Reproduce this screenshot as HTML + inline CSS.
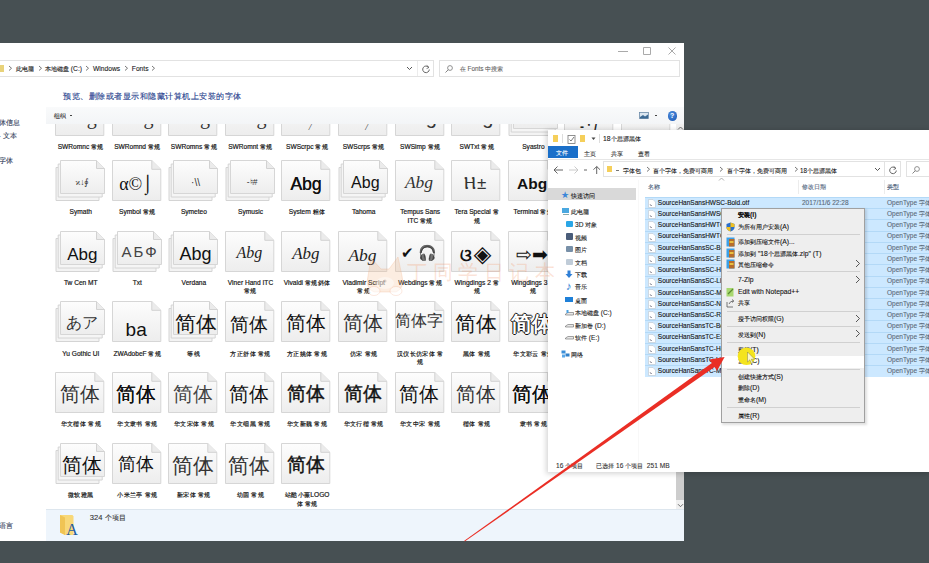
<!DOCTYPE html><html><head><meta charset="utf-8"><style>
*{margin:0;padding:0;box-sizing:border-box}
html,body{width:929px;height:563px;overflow:hidden;background:#475053;font-family:"Liberation Sans",sans-serif;color:#222}
.a{position:absolute}
.t{position:absolute;white-space:nowrap;line-height:1;-webkit-text-stroke:0.1px currentColor}
.tile{position:absolute;width:50px;height:41px}
.pg{position:absolute;left:0;top:0}
.gl{position:absolute;width:80px;text-align:center;color:#111;line-height:1;white-space:nowrap}
.lb{position:absolute;width:58px;text-align:center;font-size:6.6px;line-height:8.4px;color:#151515;white-space:nowrap;-webkit-text-stroke:0.18px currentColor}
</style></head><body>
<svg width="0" height="0" style="position:absolute"><defs>
<linearGradient id="g1" x1="0" y1="0" x2="0" y2="1"><stop offset="0" stop-color="#fdfdfd"/><stop offset="1" stop-color="#ededed"/></linearGradient>
</defs></svg>

<div class="a" id="w1" style="left:0;top:43px;width:684px;height:498px;background:#fff;overflow:hidden">
<svg class="a" style="left:600px;top:0" width="84" height="16"><path d="M18 8.5H28" stroke="#a0a0a0" stroke-width="0.9"/><path d="M43.5 4.5H50.5V11.5H43.5Z" fill="none" stroke="#a0a0a0" stroke-width="0.9"/><path d="M68.5 4.5L75.5 11.5M75.5 4.5L68.5 11.5" stroke="#a0a0a0" stroke-width="0.9"/></svg>
<div class="a" style="left:-2px;top:17.3px;width:436px;height:16.5px;border:1px solid #e2e2e2"></div>
<div class="a" style="left:417px;top:18px;width:1px;height:15px;background:#ececec"></div>
<div class="a" style="left:438.5px;top:17.3px;width:241px;height:16.5px;border:1px solid #e2e2e2"></div>
<div class="a" style="left:0;top:22px;width:4px;height:7px;background:#e8d27a"></div>
<svg class="a" style="left:7.5px;top:22.2px" width="4.5" height="6.5"><path d="M1 1L3.5 3.25L1 5.5" fill="none" stroke="#555" stroke-width="0.8"/></svg>
<div class="t" style="left:15.5px;top:23.15px;font-size:6.7px;color:#1a1a1a;"><span style="font-size:6.30px">此电脑</span></div>
<svg class="a" style="left:37.6px;top:22.2px" width="4.5" height="6.5"><path d="M1 1L3.5 3.25L1 5.5" fill="none" stroke="#555" stroke-width="0.8"/></svg>
<div class="t" style="left:45.0px;top:23.15px;font-size:6.7px;color:#1a1a1a;"><span style="font-size:6.30px">本地磁盘</span> (C:)</div>
<svg class="a" style="left:85.3px;top:22.2px" width="4.5" height="6.5"><path d="M1 1L3.5 3.25L1 5.5" fill="none" stroke="#555" stroke-width="0.8"/></svg>
<div class="t" style="left:93.0px;top:23.15px;font-size:6.7px;color:#1a1a1a;">Windows</div>
<svg class="a" style="left:123.7px;top:22.2px" width="4.5" height="6.5"><path d="M1 1L3.5 3.25L1 5.5" fill="none" stroke="#555" stroke-width="0.8"/></svg>
<div class="t" style="left:131.8px;top:23.15px;font-size:6.7px;color:#1a1a1a;">Fonts</div>
<svg class="a" style="left:151.0px;top:22.2px" width="4.5" height="6.5"><path d="M1 1L3.5 3.25L1 5.5" fill="none" stroke="#555" stroke-width="0.8"/></svg>
<svg class="a" style="left:406.4px;top:23.2px" width="7" height="4.5"><path d="M1 1L3.5 3.5L6 1" fill="none" stroke="#444" stroke-width="0.9"/></svg>
<svg class="a" style="left:421px;top:21px" width="10" height="10"><path d="M7.5 3.2A3.3 3.3 0 1 0 8.3 5.5" fill="none" stroke="#555" stroke-width="0.9"/><path d="M5.8 1.5L8 3.4L5.6 4.6" fill="none" stroke="#555" stroke-width="0.8"/></svg>
<svg class="a" style="left:444px;top:20.5px" width="10" height="10"><circle cx="6" cy="4" r="2.4" fill="none" stroke="#777" stroke-width="0.8"/><path d="M4.3 5.7L1.5 8.5" stroke="#777" stroke-width="0.9"/></svg>
<div class="t" style="left:459.8px;top:23.29px;font-size:6.4px;color:#666;"><span style="font-size:6.02px">在</span> Fonts <span style="font-size:6.02px">中搜索</span></div>
<div class="t" style="left:63.3px;top:48.75px;font-size:8.4px;color:#2b4590;-webkit-text-stroke:0.15px #2b4590;letter-spacing:0.5px">预览、删除或者显示和隐藏计算机上安装的字体</div>
<div class="t" style="left:-1.5px;top:77.00px;font-size:6.6px;color:#34405a;">体信息</div>
<div class="t" style="left:-1.5px;top:89.60px;font-size:6.6px;color:#34405a;">- 文本</div>
<div class="t" style="left:-1.5px;top:115.20px;font-size:6.6px;color:#34405a;">字体</div>
<div class="t" style="left:-1.5px;top:480.00px;font-size:6.6px;color:#34405a;">语言</div>
<div class="a" style="left:0;top:81px;width:676px;height:385px;overflow:hidden">
<div class="tile" style="left:55.1px;top:-29.0px"><svg class="pg" width="52" height="43" viewBox="0 0 52 43"><path d="M0.5 0.5H39.8L48.8 9.3V40.5H0.5Z" fill="url(#g1)" stroke="#d6d6d6"/><path d="M39.8 0.5V9.3H48.8" fill="#ebebeb" stroke="#d2d2d2"/></svg>
<div class="gl" style="left:-15.5px;top:11.3px;font:20px 'Liberation Serif', serif;color:#333">Abg</div>
</div>
<div class="lb" style="left:51.8px;top:19.4px">SWRomnc <span style="font-size:6.4px;letter-spacing:0.4px">常规</span></div>
<div class="tile" style="left:111.7px;top:-29.0px"><svg class="pg" width="52" height="43" viewBox="0 0 52 43"><path d="M0.5 0.5H39.8L48.8 9.3V40.5H0.5Z" fill="url(#g1)" stroke="#d6d6d6"/><path d="M39.8 0.5V9.3H48.8" fill="#ebebeb" stroke="#d2d2d2"/></svg>
<div class="gl" style="left:-15.5px;top:11.3px;font:20px 'Liberation Serif', serif;color:#333">Abg</div>
</div>
<div class="lb" style="left:108.4px;top:19.4px">SWRomnd <span style="font-size:6.4px;letter-spacing:0.4px">常规</span></div>
<div class="tile" style="left:168.2px;top:-29.0px"><svg class="pg" width="52" height="43" viewBox="0 0 52 43"><path d="M0.5 0.5H39.8L48.8 9.3V40.5H0.5Z" fill="url(#g1)" stroke="#d6d6d6"/><path d="M39.8 0.5V9.3H48.8" fill="#ebebeb" stroke="#d2d2d2"/></svg>
<div class="gl" style="left:-15.5px;top:11.3px;font:20px 'Liberation Serif', serif;color:#333">Abg</div>
</div>
<div class="lb" style="left:164.9px;top:19.4px">SWRomns <span style="font-size:6.4px;letter-spacing:0.4px">常规</span></div>
<div class="tile" style="left:224.8px;top:-29.0px"><svg class="pg" width="52" height="43" viewBox="0 0 52 43"><path d="M0.5 0.5H39.8L48.8 9.3V40.5H0.5Z" fill="url(#g1)" stroke="#d6d6d6"/><path d="M39.8 0.5V9.3H48.8" fill="#ebebeb" stroke="#d2d2d2"/></svg>
<div class="gl" style="left:-15.5px;top:11.3px;font:20px 'Liberation Serif', serif;color:#333">Abg</div>
</div>
<div class="lb" style="left:221.5px;top:19.4px">SWRomnt <span style="font-size:6.4px;letter-spacing:0.4px">常规</span></div>
<div class="tile" style="left:281.4px;top:-29.0px"><svg class="pg" width="52" height="43" viewBox="0 0 52 43"><path d="M0.5 0.5H39.8L48.8 9.3V40.5H0.5Z" fill="url(#g1)" stroke="#d6d6d6"/><path d="M39.8 0.5V9.3H48.8" fill="#ebebeb" stroke="#d2d2d2"/></svg>
<div class="gl" style="left:-15.5px;top:27.1px;font:italic 9px 'Liberation Serif', serif;color:#222;text-indent:8px">/</div>
</div>
<div class="lb" style="left:278.1px;top:19.4px">SWScrpc <span style="font-size:6.4px;letter-spacing:0.4px">常规</span></div>
<div class="tile" style="left:338.0px;top:-29.0px"><svg class="pg" width="52" height="43" viewBox="0 0 52 43"><path d="M0.5 0.5H39.8L48.8 9.3V40.5H0.5Z" fill="url(#g1)" stroke="#d6d6d6"/><path d="M39.8 0.5V9.3H48.8" fill="#ebebeb" stroke="#d2d2d2"/></svg>
<div class="gl" style="left:-15.5px;top:27.1px;font:italic 9px 'Liberation Serif', serif;color:#222;text-indent:8px">/</div>
</div>
<div class="lb" style="left:334.7px;top:19.4px">SWScrps <span style="font-size:6.4px;letter-spacing:0.4px">常规</span></div>
<div class="tile" style="left:394.5px;top:-29.0px"><svg class="pg" width="52" height="43" viewBox="0 0 52 43"><path d="M0.5 0.5H39.8L48.8 9.3V40.5H0.5Z" fill="url(#g1)" stroke="#d6d6d6"/><path d="M39.8 0.5V9.3H48.8" fill="#ebebeb" stroke="#d2d2d2"/></svg>
<div class="gl" style="left:-15.5px;top:10.8px;font:20px 'Liberation Sans', sans-serif;color:#333">Abg</div>
</div>
<div class="lb" style="left:391.2px;top:19.4px">SWSimp <span style="font-size:6.4px;letter-spacing:0.4px">常规</span></div>
<div class="tile" style="left:451.1px;top:-29.0px"><svg class="pg" width="52" height="43" viewBox="0 0 52 43"><path d="M0.5 0.5H39.8L48.8 9.3V40.5H0.5Z" fill="url(#g1)" stroke="#d6d6d6"/><path d="M39.8 0.5V9.3H48.8" fill="#ebebeb" stroke="#d2d2d2"/></svg>
<div class="gl" style="left:-15.5px;top:10.8px;font:20px 'Liberation Sans', sans-serif;color:#333">Abg</div>
</div>
<div class="lb" style="left:447.8px;top:19.4px">SWTxt <span style="font-size:6.4px;letter-spacing:0.4px">常规</span></div>
<div class="tile" style="left:507.7px;top:-29.0px"><svg class="pg" width="52" height="43" viewBox="0 0 52 43"><path d="M1 7.5H36L44 15.5V40.5H1Z" fill="#f3f3f3" stroke="#d4d4d4"/><path d="M3.2 4H39.2L47.2 12V37H3.2Z" fill="#f5f5f5" stroke="#d4d4d4"/><path d="M5.5 0.5H41.5L49.5 8.5V33.5H5.5Z" fill="url(#g1)" stroke="#d6d6d6"/><path d="M41.5 0.5V8.5H49.5" fill="#ebebeb" stroke="#d2d2d2"/></svg>
</div>
<div class="lb" style="left:504.4px;top:19.4px">Syastro</div>
<div class="tile" style="left:564.2px;top:-29.0px"><svg class="pg" width="52" height="43" viewBox="0 0 52 43"><path d="M0.5 0.5H39.8L48.8 9.3V40.5H0.5Z" fill="url(#g1)" stroke="#d6d6d6"/><path d="M39.8 0.5V9.3H48.8" fill="#ebebeb" stroke="#d2d2d2"/></svg>
<div class="gl" style="left:-15.5px;top:24.8px;font:bold 12px 'Liberation Sans', sans-serif;color:#222">- ‘ /</div>
</div>
<div class="tile" style="left:620.8px;top:-29.0px"><svg class="pg" width="52" height="43" viewBox="0 0 52 43"><path d="M0.5 0.5H39.8L48.8 9.3V40.5H0.5Z" fill="url(#g1)" stroke="#d6d6d6"/><path d="M39.8 0.5V9.3H48.8" fill="#ebebeb" stroke="#d2d2d2"/></svg>
</div>
<div class="tile" style="left:55.1px;top:36.0px"><svg class="pg" width="52" height="43" viewBox="0 0 52 43"><path d="M1 7.5H36L44 15.5V40.5H1Z" fill="#f3f3f3" stroke="#d4d4d4"/><path d="M3.2 4H39.2L47.2 12V37H3.2Z" fill="#f5f5f5" stroke="#d4d4d4"/><path d="M5.5 0.5H41.5L49.5 8.5V33.5H5.5Z" fill="url(#g1)" stroke="#d6d6d6"/><path d="M41.5 0.5V8.5H49.5" fill="#ebebeb" stroke="#d2d2d2"/></svg>
<div class="gl" style="left:-12.7px;top:17.2px;font:8.5px 'Liberation Serif', serif;color:#333">ϰ↓∮</div>
</div>
<div class="lb" style="left:51.8px;top:84.4px">Symath</div>
<div class="tile" style="left:111.7px;top:36.0px"><svg class="pg" width="52" height="43" viewBox="0 0 52 43"><path d="M0.5 0.5H39.8L48.8 9.3V40.5H0.5Z" fill="url(#g1)" stroke="#d6d6d6"/><path d="M39.8 0.5V9.3H48.8" fill="#ebebeb" stroke="#d2d2d2"/></svg>
<div class="gl" style="left:-15.5px;top:13.5px;font:18px 'Liberation Serif', serif">α©⌡</div>
</div>
<div class="lb" style="left:108.4px;top:84.4px">Symbol <span style="font-size:6.4px;letter-spacing:0.4px">常规</span></div>
<div class="tile" style="left:168.2px;top:36.0px"><svg class="pg" width="52" height="43" viewBox="0 0 52 43"><path d="M1 7.5H36L44 15.5V40.5H1Z" fill="#f3f3f3" stroke="#d4d4d4"/><path d="M3.2 4H39.2L47.2 12V37H3.2Z" fill="#f5f5f5" stroke="#d4d4d4"/><path d="M5.5 0.5H41.5L49.5 8.5V33.5H5.5Z" fill="url(#g1)" stroke="#d6d6d6"/><path d="M41.5 0.5V8.5H49.5" fill="#ebebeb" stroke="#d2d2d2"/></svg>
<div class="gl" style="left:-12.7px;top:16.5px;font:10px 'Liberation Sans', sans-serif;color:#333">·\\</div>
</div>
<div class="lb" style="left:164.9px;top:84.4px">Symeteo</div>
<div class="tile" style="left:224.8px;top:36.0px"><svg class="pg" width="52" height="43" viewBox="0 0 52 43"><path d="M1 7.5H36L44 15.5V40.5H1Z" fill="#f3f3f3" stroke="#d4d4d4"/><path d="M3.2 4H39.2L47.2 12V37H3.2Z" fill="#f5f5f5" stroke="#d4d4d4"/><path d="M5.5 0.5H41.5L49.5 8.5V33.5H5.5Z" fill="url(#g1)" stroke="#d6d6d6"/><path d="M41.5 0.5V8.5H49.5" fill="#ebebeb" stroke="#d2d2d2"/></svg>
<div class="gl" style="left:-12.7px;top:17.2px;font:8.5px 'Liberation Sans', sans-serif;color:#333">-♮#</div>
</div>
<div class="lb" style="left:221.5px;top:84.4px">Symusic</div>
<div class="tile" style="left:281.4px;top:36.0px"><svg class="pg" width="52" height="43" viewBox="0 0 52 43"><path d="M0.5 0.5H39.8L48.8 9.3V40.5H0.5Z" fill="url(#g1)" stroke="#d6d6d6"/><path d="M39.8 0.5V9.3H48.8" fill="#ebebeb" stroke="#d2d2d2"/></svg>
<div class="gl" style="left:-15.5px;top:14.1px;font:17.5px 'Liberation Sans', sans-serif;text-shadow:0.35px 0 0 #111">Abg</div>
</div>
<div class="lb" style="left:278.1px;top:84.4px">System <span style="font-size:6.4px;letter-spacing:0.4px">粗体</span></div>
<div class="tile" style="left:338.0px;top:36.0px"><svg class="pg" width="52" height="43" viewBox="0 0 52 43"><path d="M1 7.5H36L44 15.5V40.5H1Z" fill="#f3f3f3" stroke="#d4d4d4"/><path d="M3.2 4H39.2L47.2 12V37H3.2Z" fill="#f5f5f5" stroke="#d4d4d4"/><path d="M5.5 0.5H41.5L49.5 8.5V33.5H5.5Z" fill="url(#g1)" stroke="#d6d6d6"/><path d="M41.5 0.5V8.5H49.5" fill="#ebebeb" stroke="#d2d2d2"/></svg>
<div class="gl" style="left:-12.7px;top:14.3px;font:16px 'Liberation Sans', sans-serif">Abg</div>
</div>
<div class="lb" style="left:334.7px;top:84.4px">Tahoma</div>
<div class="tile" style="left:394.5px;top:36.0px"><svg class="pg" width="52" height="43" viewBox="0 0 52 43"><path d="M0.5 0.5H39.8L48.8 9.3V40.5H0.5Z" fill="url(#g1)" stroke="#d6d6d6"/><path d="M39.8 0.5V9.3H48.8" fill="#ebebeb" stroke="#d2d2d2"/></svg>
<div class="gl" style="left:-15.5px;top:12.1px;font:italic 17.5px 'Liberation Serif', serif;color:#333">Abg</div>
</div>
<div class="lb" style="left:391.2px;top:84.4px">Tempus Sans<br>ITC <span style="font-size:6.4px;letter-spacing:0.4px">常规</span></div>
<div class="tile" style="left:451.1px;top:36.0px"><svg class="pg" width="52" height="43" viewBox="0 0 52 43"><path d="M0.5 0.5H39.8L48.8 9.3V40.5H0.5Z" fill="url(#g1)" stroke="#d6d6d6"/><path d="M39.8 0.5V9.3H48.8" fill="#ebebeb" stroke="#d2d2d2"/></svg>
<div class="gl" style="left:-15.5px;top:14.2px;font:17px 'Liberation Sans', sans-serif;color:#333;letter-spacing:1px">Ⲏ±</div>
</div>
<div class="lb" style="left:447.8px;top:84.4px">Tera Special <span style="font-size:6.4px;letter-spacing:0.4px">常</span><br><span style="font-size:6.4px;letter-spacing:0.4px">规</span></div>
<div class="tile" style="left:507.7px;top:36.0px"><svg class="pg" width="52" height="43" viewBox="0 0 52 43"><path d="M0.5 0.5H39.8L48.8 9.3V40.5H0.5Z" fill="url(#g1)" stroke="#d6d6d6"/><path d="M39.8 0.5V9.3H48.8" fill="#ebebeb" stroke="#d2d2d2"/></svg>
<div class="gl" style="left:-15.5px;top:15.3px;font:bold 15.5px 'Liberation Sans', sans-serif">Abg</div>
</div>
<div class="lb" style="left:504.4px;top:84.4px">Terminal <span style="font-size:6.4px;letter-spacing:0.4px">常规</span></div>
<div class="tile" style="left:564.2px;top:36.0px"><svg class="pg" width="52" height="43" viewBox="0 0 52 43"><path d="M0.5 0.5H39.8L48.8 9.3V40.5H0.5Z" fill="url(#g1)" stroke="#d6d6d6"/><path d="M39.8 0.5V9.3H48.8" fill="#ebebeb" stroke="#d2d2d2"/></svg>
</div>
<div class="tile" style="left:620.8px;top:36.0px"><svg class="pg" width="52" height="43" viewBox="0 0 52 43"><path d="M0.5 0.5H39.8L48.8 9.3V40.5H0.5Z" fill="url(#g1)" stroke="#d6d6d6"/><path d="M39.8 0.5V9.3H48.8" fill="#ebebeb" stroke="#d2d2d2"/></svg>
</div>
<div class="tile" style="left:55.1px;top:106.5px"><svg class="pg" width="52" height="43" viewBox="0 0 52 43"><path d="M1 7.5H36L44 15.5V40.5H1Z" fill="#f3f3f3" stroke="#d4d4d4"/><path d="M3.2 4H39.2L47.2 12V37H3.2Z" fill="#f5f5f5" stroke="#d4d4d4"/><path d="M5.5 0.5H41.5L49.5 8.5V33.5H5.5Z" fill="url(#g1)" stroke="#d6d6d6"/><path d="M41.5 0.5V8.5H49.5" fill="#ebebeb" stroke="#d2d2d2"/></svg>
<div class="gl" style="left:-12.7px;top:14.2px;font:17px 'Liberation Sans', sans-serif">Abg</div>
</div>
<div class="lb" style="left:51.8px;top:154.9px">Tw Cen MT</div>
<div class="tile" style="left:111.7px;top:106.5px"><svg class="pg" width="52" height="43" viewBox="0 0 52 43"><path d="M1 7.5H36L44 15.5V40.5H1Z" fill="#f3f3f3" stroke="#d4d4d4"/><path d="M3.2 4H39.2L47.2 12V37H3.2Z" fill="#f5f5f5" stroke="#d4d4d4"/><path d="M5.5 0.5H41.5L49.5 8.5V33.5H5.5Z" fill="url(#g1)" stroke="#d6d6d6"/><path d="M41.5 0.5V8.5H49.5" fill="#ebebeb" stroke="#d2d2d2"/></svg>
<div class="gl" style="left:-12.7px;top:12.9px;font:15px 'Liberation Sans', sans-serif;color:#444;letter-spacing:2px;text-indent:2px">АБФ</div>
</div>
<div class="lb" style="left:108.4px;top:154.9px">Txt</div>
<div class="tile" style="left:168.2px;top:106.5px"><svg class="pg" width="52" height="43" viewBox="0 0 52 43"><path d="M1 7.5H36L44 15.5V40.5H1Z" fill="#f3f3f3" stroke="#d4d4d4"/><path d="M3.2 4H39.2L47.2 12V37H3.2Z" fill="#f5f5f5" stroke="#d4d4d4"/><path d="M5.5 0.5H41.5L49.5 8.5V33.5H5.5Z" fill="url(#g1)" stroke="#d6d6d6"/><path d="M41.5 0.5V8.5H49.5" fill="#ebebeb" stroke="#d2d2d2"/></svg>
<div class="gl" style="left:-12.7px;top:13.5px;font:18px 'Liberation Sans', sans-serif">Abg</div>
</div>
<div class="lb" style="left:164.9px;top:154.9px">Verdana</div>
<div class="tile" style="left:224.8px;top:106.5px"><svg class="pg" width="52" height="43" viewBox="0 0 52 43"><path d="M0.5 0.5H39.8L48.8 9.3V40.5H0.5Z" fill="url(#g1)" stroke="#d6d6d6"/><path d="M39.8 0.5V9.3H48.8" fill="#ebebeb" stroke="#d2d2d2"/></svg>
<div class="gl" style="left:-15.5px;top:13.8px;font:italic 16px 'Liberation Serif', serif;color:#222">Abg</div>
</div>
<div class="lb" style="left:221.5px;top:154.9px">Viner Hand ITC<br><span style="font-size:6.4px;letter-spacing:0.4px">常规</span></div>
<div class="tile" style="left:281.4px;top:106.5px"><svg class="pg" width="52" height="43" viewBox="0 0 52 43"><path d="M0.5 0.5H39.8L48.8 9.3V40.5H0.5Z" fill="url(#g1)" stroke="#d6d6d6"/><path d="M39.8 0.5V9.3H48.8" fill="#ebebeb" stroke="#d2d2d2"/></svg>
<div class="gl" style="left:-15.5px;top:13.7px;font:italic 17px 'Liberation Serif', serif;color:#222">Abg</div>
</div>
<div class="lb" style="left:278.1px;top:154.9px">Vivaldi <span style="font-size:6.4px;letter-spacing:0.4px">常规斜体</span></div>
<div class="tile" style="left:338.0px;top:106.5px"><svg class="pg" width="52" height="43" viewBox="0 0 52 43"><path d="M0.5 0.5H39.8L48.8 9.3V40.5H0.5Z" fill="url(#g1)" stroke="#d6d6d6"/><path d="M39.8 0.5V9.3H48.8" fill="#ebebeb" stroke="#d2d2d2"/></svg>
<div class="gl" style="left:-15.5px;top:14.1px;font:italic 17.5px 'Liberation Serif', serif;color:#222">Abg</div>
</div>
<div class="lb" style="left:334.7px;top:154.9px">Vladimir Script<br><span style="font-size:6.4px;letter-spacing:0.4px">常规</span></div>
<div class="tile" style="left:394.5px;top:106.5px"><svg class="pg" width="52" height="43" viewBox="0 0 52 43"><path d="M0.5 0.5H39.8L48.8 9.3V40.5H0.5Z" fill="url(#g1)" stroke="#d6d6d6"/><path d="M39.8 0.5V9.3H48.8" fill="#ebebeb" stroke="#d2d2d2"/></svg>
<div class="gl" style="left:-15.5px;top:13.8px;font:15px 'Liberation Sans', sans-serif">✔ 🎧</div>
</div>
<div class="lb" style="left:391.2px;top:154.9px">Webdings <span style="font-size:6.4px;letter-spacing:0.4px">常规</span></div>
<div class="tile" style="left:451.1px;top:106.5px"><svg class="pg" width="52" height="43" viewBox="0 0 52 43"><path d="M0.5 0.5H39.8L48.8 9.3V40.5H0.5Z" fill="url(#g1)" stroke="#d6d6d6"/><path d="M39.8 0.5V9.3H48.8" fill="#ebebeb" stroke="#d2d2d2"/></svg>
<div class="gl" style="left:-15.5px;top:15.2px;font:bold 17px 'Liberation Sans', sans-serif;letter-spacing:2px;text-indent:2px">ଓ◈</div>
</div>
<div class="lb" style="left:447.8px;top:154.9px">Wingdings 2 <span style="font-size:6.4px;letter-spacing:0.4px">常</span><br><span style="font-size:6.4px;letter-spacing:0.4px">规</span></div>
<div class="tile" style="left:507.7px;top:106.5px"><svg class="pg" width="52" height="43" viewBox="0 0 52 43"><path d="M0.5 0.5H39.8L48.8 9.3V40.5H0.5Z" fill="url(#g1)" stroke="#d6d6d6"/><path d="M39.8 0.5V9.3H48.8" fill="#ebebeb" stroke="#d2d2d2"/></svg>
<div class="gl" style="left:-15.5px;top:12.4px;font:19px 'Liberation Sans', sans-serif">⇨➡</div>
</div>
<div class="lb" style="left:504.4px;top:154.9px">Wingdings 3 <span style="font-size:6.4px;letter-spacing:0.4px">常</span><br><span style="font-size:6.4px;letter-spacing:0.4px">规</span></div>
<div class="tile" style="left:564.2px;top:106.5px"><svg class="pg" width="52" height="43" viewBox="0 0 52 43"><path d="M0.5 0.5H39.8L48.8 9.3V40.5H0.5Z" fill="url(#g1)" stroke="#d6d6d6"/><path d="M39.8 0.5V9.3H48.8" fill="#ebebeb" stroke="#d2d2d2"/></svg>
</div>
<div class="tile" style="left:620.8px;top:106.5px"><svg class="pg" width="52" height="43" viewBox="0 0 52 43"><path d="M0.5 0.5H39.8L48.8 9.3V40.5H0.5Z" fill="url(#g1)" stroke="#d6d6d6"/><path d="M39.8 0.5V9.3H48.8" fill="#ebebeb" stroke="#d2d2d2"/></svg>
</div>
<div class="tile" style="left:55.1px;top:177.3px"><svg class="pg" width="52" height="43" viewBox="0 0 52 43"><path d="M1 7.5H36L44 15.5V40.5H1Z" fill="#f3f3f3" stroke="#d4d4d4"/><path d="M3.2 4H39.2L47.2 12V37H3.2Z" fill="#f5f5f5" stroke="#d4d4d4"/><path d="M5.5 0.5H41.5L49.5 8.5V33.5H5.5Z" fill="url(#g1)" stroke="#d6d6d6"/><path d="M41.5 0.5V8.5H49.5" fill="#ebebeb" stroke="#d2d2d2"/></svg>
<div class="gl" style="left:-12.7px;top:12.1px;font:16px 'Liberation Sans', sans-serif;color:#333">あア</div>
</div>
<div class="lb" style="left:51.8px;top:225.7px">Yu Gothic UI</div>
<div class="tile" style="left:111.7px;top:177.3px"><svg class="pg" width="52" height="43" viewBox="0 0 52 43"><path d="M0.5 0.5H39.8L48.8 9.3V40.5H0.5Z" fill="url(#g1)" stroke="#d6d6d6"/><path d="M39.8 0.5V9.3H48.8" fill="#ebebeb" stroke="#d2d2d2"/></svg>
<div class="gl" style="left:-15.5px;top:17.9px;font:19px 'Liberation Sans', sans-serif">ba</div>
</div>
<div class="lb" style="left:108.4px;top:225.7px">ZWAdobeF <span style="font-size:6.4px;letter-spacing:0.4px">常规</span></div>
<div class="tile" style="left:168.2px;top:177.3px"><svg class="pg" width="52" height="43" viewBox="0 0 52 43"><path d="M1 7.5H36L44 15.5V40.5H1Z" fill="#f3f3f3" stroke="#d4d4d4"/><path d="M3.2 4H39.2L47.2 12V37H3.2Z" fill="#f5f5f5" stroke="#d4d4d4"/><path d="M5.5 0.5H41.5L49.5 8.5V33.5H5.5Z" fill="url(#g1)" stroke="#d6d6d6"/><path d="M41.5 0.5V8.5H49.5" fill="#ebebeb" stroke="#d2d2d2"/></svg>
<div class="gl" style="left:-12.7px;top:8.8px;font:21px 'Liberation Sans', sans-serif">简体</div>
</div>
<div class="lb" style="left:164.9px;top:225.7px"><span style="font-size:6.4px;letter-spacing:0.4px">等线</span></div>
<div class="tile" style="left:224.8px;top:177.3px"><svg class="pg" width="52" height="43" viewBox="0 0 52 43"><path d="M0.5 0.5H39.8L48.8 9.3V40.5H0.5Z" fill="url(#g1)" stroke="#d6d6d6"/><path d="M39.8 0.5V9.3H48.8" fill="#ebebeb" stroke="#d2d2d2"/></svg>
<div class="gl" style="left:-15.5px;top:11.2px;font:19px 'Liberation Serif', serif">简体</div>
</div>
<div class="lb" style="left:221.5px;top:225.7px"><span style="font-size:6.4px;letter-spacing:0.4px">方正舒体</span> <span style="font-size:6.4px;letter-spacing:0.4px">常规</span></div>
<div class="tile" style="left:281.4px;top:177.3px"><svg class="pg" width="52" height="43" viewBox="0 0 52 43"><path d="M0.5 0.5H39.8L48.8 9.3V40.5H0.5Z" fill="url(#g1)" stroke="#d6d6d6"/><path d="M39.8 0.5V9.3H48.8" fill="#ebebeb" stroke="#d2d2d2"/></svg>
<div class="gl" style="left:-15.5px;top:9.1px;font:20px 'Liberation Sans', sans-serif">简体</div>
</div>
<div class="lb" style="left:278.1px;top:225.7px"><span style="font-size:6.4px;letter-spacing:0.4px">方正姚体</span> <span style="font-size:6.4px;letter-spacing:0.4px">常规</span></div>
<div class="tile" style="left:338.0px;top:177.3px"><svg class="pg" width="52" height="43" viewBox="0 0 52 43"><path d="M0.5 0.5H39.8L48.8 9.3V40.5H0.5Z" fill="url(#g1)" stroke="#d6d6d6"/><path d="M39.8 0.5V9.3H48.8" fill="#ebebeb" stroke="#d2d2d2"/></svg>
<div class="gl" style="left:-15.5px;top:9.1px;font:20px 'Liberation Serif', serif;color:#333">简体</div>
</div>
<div class="lb" style="left:334.7px;top:225.7px"><span style="font-size:6.4px;letter-spacing:0.4px">仿宋</span> <span style="font-size:6.4px;letter-spacing:0.4px">常规</span></div>
<div class="tile" style="left:394.5px;top:177.3px"><svg class="pg" width="52" height="43" viewBox="0 0 52 43"><path d="M0.5 0.5H39.8L48.8 9.3V40.5H0.5Z" fill="url(#g1)" stroke="#d6d6d6"/><path d="M39.8 0.5V9.3H48.8" fill="#ebebeb" stroke="#d2d2d2"/></svg>
<div class="gl" style="left:-15.5px;top:9.3px;font:16px 'Liberation Serif', serif;color:#333">简体字</div>
</div>
<div class="lb" style="left:391.2px;top:225.7px"><span style="font-size:6.4px;letter-spacing:0.4px">汉仪长仿宋体</span> <span style="font-size:6.4px;letter-spacing:0.4px">常</span><br><span style="font-size:6.4px;letter-spacing:0.4px">规</span></div>
<div class="tile" style="left:451.1px;top:177.3px"><svg class="pg" width="52" height="43" viewBox="0 0 52 43"><path d="M0.5 0.5H39.8L48.8 9.3V40.5H0.5Z" fill="url(#g1)" stroke="#d6d6d6"/><path d="M39.8 0.5V9.3H48.8" fill="#ebebeb" stroke="#d2d2d2"/></svg>
<div class="gl" style="left:-15.5px;top:9.0px;font:21px 'Liberation Sans', sans-serif">简体</div>
</div>
<div class="lb" style="left:447.8px;top:225.7px"><span style="font-size:6.4px;letter-spacing:0.4px">黑体</span> <span style="font-size:6.4px;letter-spacing:0.4px">常规</span></div>
<div class="tile" style="left:507.7px;top:177.3px"><svg class="pg" width="52" height="43" viewBox="0 0 52 43"><path d="M0.5 0.5H39.8L48.8 9.3V40.5H0.5Z" fill="url(#g1)" stroke="#d6d6d6"/><path d="M39.8 0.5V9.3H48.8" fill="#ebebeb" stroke="#d2d2d2"/></svg>
<div class="gl" style="left:-15.5px;top:9.0px;font:bold 21px 'Liberation Sans', sans-serif;color:#fff;text-shadow:0.9px 0 0 #111,-0.9px 0 0 #111,0 0.9px 0 #111,0 -0.9px 0 #111">简体</div>
</div>
<div class="lb" style="left:504.4px;top:225.7px"><span style="font-size:6.4px;letter-spacing:0.4px">华文彩云</span> <span style="font-size:6.4px;letter-spacing:0.4px">常规</span></div>
<div class="tile" style="left:564.2px;top:177.3px"><svg class="pg" width="52" height="43" viewBox="0 0 52 43"><path d="M0.5 0.5H39.8L48.8 9.3V40.5H0.5Z" fill="url(#g1)" stroke="#d6d6d6"/><path d="M39.8 0.5V9.3H48.8" fill="#ebebeb" stroke="#d2d2d2"/></svg>
</div>
<div class="tile" style="left:620.8px;top:177.3px"><svg class="pg" width="52" height="43" viewBox="0 0 52 43"><path d="M0.5 0.5H39.8L48.8 9.3V40.5H0.5Z" fill="url(#g1)" stroke="#d6d6d6"/><path d="M39.8 0.5V9.3H48.8" fill="#ebebeb" stroke="#d2d2d2"/></svg>
</div>
<div class="tile" style="left:55.1px;top:248.0px"><svg class="pg" width="52" height="43" viewBox="0 0 52 43"><path d="M0.5 0.5H39.8L48.8 9.3V40.5H0.5Z" fill="url(#g1)" stroke="#d6d6d6"/><path d="M39.8 0.5V9.3H48.8" fill="#ebebeb" stroke="#d2d2d2"/></svg>
<div class="gl" style="left:-15.5px;top:9.1px;font:20px 'Liberation Serif', serif;color:#333">简体</div>
</div>
<div class="lb" style="left:51.8px;top:296.4px"><span style="font-size:6.4px;letter-spacing:0.4px">华文楷体</span> <span style="font-size:6.4px;letter-spacing:0.4px">常规</span></div>
<div class="tile" style="left:111.7px;top:248.0px"><svg class="pg" width="52" height="43" viewBox="0 0 52 43"><path d="M0.5 0.5H39.8L48.8 9.3V40.5H0.5Z" fill="url(#g1)" stroke="#d6d6d6"/><path d="M39.8 0.5V9.3H48.8" fill="#ebebeb" stroke="#d2d2d2"/></svg>
<div class="gl" style="left:-15.5px;top:9.1px;font:20px 'Liberation Sans', sans-serif;text-shadow:0.3px 0 0 #111">简体</div>
</div>
<div class="lb" style="left:108.4px;top:296.4px"><span style="font-size:6.4px;letter-spacing:0.4px">华文隶书</span> <span style="font-size:6.4px;letter-spacing:0.4px">常规</span></div>
<div class="tile" style="left:168.2px;top:248.0px"><svg class="pg" width="52" height="43" viewBox="0 0 52 43"><path d="M0.5 0.5H39.8L48.8 9.3V40.5H0.5Z" fill="url(#g1)" stroke="#d6d6d6"/><path d="M39.8 0.5V9.3H48.8" fill="#ebebeb" stroke="#d2d2d2"/></svg>
<div class="gl" style="left:-15.5px;top:9.1px;font:20px 'Liberation Serif', serif;color:#444">简体</div>
</div>
<div class="lb" style="left:164.9px;top:296.4px"><span style="font-size:6.4px;letter-spacing:0.4px">华文宋体</span> <span style="font-size:6.4px;letter-spacing:0.4px">常规</span></div>
<div class="tile" style="left:224.8px;top:248.0px"><svg class="pg" width="52" height="43" viewBox="0 0 52 43"><path d="M0.5 0.5H39.8L48.8 9.3V40.5H0.5Z" fill="url(#g1)" stroke="#d6d6d6"/><path d="M39.8 0.5V9.3H48.8" fill="#ebebeb" stroke="#d2d2d2"/></svg>
<div class="gl" style="left:-15.5px;top:9.1px;font:20px 'Liberation Sans', sans-serif">简体</div>
</div>
<div class="lb" style="left:221.5px;top:296.4px"><span style="font-size:6.4px;letter-spacing:0.4px">华文细黑</span> <span style="font-size:6.4px;letter-spacing:0.4px">常规</span></div>
<div class="tile" style="left:281.4px;top:248.0px"><svg class="pg" width="52" height="43" viewBox="0 0 52 43"><path d="M0.5 0.5H39.8L48.8 9.3V40.5H0.5Z" fill="url(#g1)" stroke="#d6d6d6"/><path d="M39.8 0.5V9.3H48.8" fill="#ebebeb" stroke="#d2d2d2"/></svg>
<div class="gl" style="left:-15.5px;top:9.2px;font:19px 'Liberation Sans', sans-serif;-webkit-text-stroke:0.4px #111">简体</div>
</div>
<div class="lb" style="left:278.1px;top:296.4px"><span style="font-size:6.4px;letter-spacing:0.4px">华文新魏</span> <span style="font-size:6.4px;letter-spacing:0.4px">常规</span></div>
<div class="tile" style="left:338.0px;top:248.0px"><svg class="pg" width="52" height="43" viewBox="0 0 52 43"><path d="M0.5 0.5H39.8L48.8 9.3V40.5H0.5Z" fill="url(#g1)" stroke="#d6d6d6"/><path d="M39.8 0.5V9.3H48.8" fill="#ebebeb" stroke="#d2d2d2"/></svg>
<div class="gl" style="left:-15.5px;top:9.2px;font:19px 'Liberation Sans', sans-serif;-webkit-text-stroke:0.4px #111">简体</div>
</div>
<div class="lb" style="left:334.7px;top:296.4px"><span style="font-size:6.4px;letter-spacing:0.4px">华文行楷</span> <span style="font-size:6.4px;letter-spacing:0.4px">常规</span></div>
<div class="tile" style="left:394.5px;top:248.0px"><svg class="pg" width="52" height="43" viewBox="0 0 52 43"><path d="M0.5 0.5H39.8L48.8 9.3V40.5H0.5Z" fill="url(#g1)" stroke="#d6d6d6"/><path d="M39.8 0.5V9.3H48.8" fill="#ebebeb" stroke="#d2d2d2"/></svg>
<div class="gl" style="left:-15.5px;top:9.1px;font:20px 'Liberation Serif', serif">简体</div>
</div>
<div class="lb" style="left:391.2px;top:296.4px"><span style="font-size:6.4px;letter-spacing:0.4px">华文中宋</span> <span style="font-size:6.4px;letter-spacing:0.4px">常规</span></div>
<div class="tile" style="left:451.1px;top:248.0px"><svg class="pg" width="52" height="43" viewBox="0 0 52 43"><path d="M0.5 0.5H39.8L48.8 9.3V40.5H0.5Z" fill="url(#g1)" stroke="#d6d6d6"/><path d="M39.8 0.5V9.3H48.8" fill="#ebebeb" stroke="#d2d2d2"/></svg>
<div class="gl" style="left:-15.5px;top:9.1px;font:20px 'Liberation Serif', serif;color:#333">简体</div>
</div>
<div class="lb" style="left:447.8px;top:296.4px"><span style="font-size:6.4px;letter-spacing:0.4px">楷体</span> <span style="font-size:6.4px;letter-spacing:0.4px">常规</span></div>
<div class="tile" style="left:507.7px;top:248.0px"><svg class="pg" width="52" height="43" viewBox="0 0 52 43"><path d="M0.5 0.5H39.8L48.8 9.3V40.5H0.5Z" fill="url(#g1)" stroke="#d6d6d6"/><path d="M39.8 0.5V9.3H48.8" fill="#ebebeb" stroke="#d2d2d2"/></svg>
<div class="gl" style="left:-15.5px;top:9.1px;font:20px 'Liberation Sans', sans-serif;text-shadow:0.25px 0 0 #111">简体</div>
</div>
<div class="lb" style="left:504.4px;top:296.4px"><span style="font-size:6.4px;letter-spacing:0.4px">隶书</span> <span style="font-size:6.4px;letter-spacing:0.4px">常规</span></div>
<div class="tile" style="left:564.2px;top:248.0px"><svg class="pg" width="52" height="43" viewBox="0 0 52 43"><path d="M0.5 0.5H39.8L48.8 9.3V40.5H0.5Z" fill="url(#g1)" stroke="#d6d6d6"/><path d="M39.8 0.5V9.3H48.8" fill="#ebebeb" stroke="#d2d2d2"/></svg>
</div>
<div class="tile" style="left:620.8px;top:248.0px"><svg class="pg" width="52" height="43" viewBox="0 0 52 43"><path d="M0.5 0.5H39.8L48.8 9.3V40.5H0.5Z" fill="url(#g1)" stroke="#d6d6d6"/><path d="M39.8 0.5V9.3H48.8" fill="#ebebeb" stroke="#d2d2d2"/></svg>
</div>
<div class="tile" style="left:55.1px;top:319.0px"><svg class="pg" width="52" height="43" viewBox="0 0 52 43"><path d="M1 7.5H36L44 15.5V40.5H1Z" fill="#f3f3f3" stroke="#d4d4d4"/><path d="M3.2 4H39.2L47.2 12V37H3.2Z" fill="#f5f5f5" stroke="#d4d4d4"/><path d="M5.5 0.5H41.5L49.5 8.5V33.5H5.5Z" fill="url(#g1)" stroke="#d6d6d6"/><path d="M41.5 0.5V8.5H49.5" fill="#ebebeb" stroke="#d2d2d2"/></svg>
<div class="gl" style="left:-12.7px;top:8.9px;font:20px 'Liberation Sans', sans-serif">简体</div>
</div>
<div class="lb" style="left:51.8px;top:367.4px"><span style="font-size:6.4px;letter-spacing:0.4px">微软雅黑</span></div>
<div class="tile" style="left:111.7px;top:319.0px"><svg class="pg" width="52" height="43" viewBox="0 0 52 43"><path d="M0.5 0.5H39.8L48.8 9.3V40.5H0.5Z" fill="url(#g1)" stroke="#d6d6d6"/><path d="M39.8 0.5V9.3H48.8" fill="#ebebeb" stroke="#d2d2d2"/></svg>
<div class="gl" style="left:-15.5px;top:9.2px;font:18px 'Liberation Sans', sans-serif">简体</div>
</div>
<div class="lb" style="left:108.4px;top:367.4px"><span style="font-size:6.4px;letter-spacing:0.4px">小米兰亭</span> <span style="font-size:6.4px;letter-spacing:0.4px">常规</span></div>
<div class="tile" style="left:168.2px;top:319.0px"><svg class="pg" width="52" height="43" viewBox="0 0 52 43"><path d="M0.5 0.5H39.8L48.8 9.3V40.5H0.5Z" fill="url(#g1)" stroke="#d6d6d6"/><path d="M39.8 0.5V9.3H48.8" fill="#ebebeb" stroke="#d2d2d2"/></svg>
<div class="gl" style="left:-15.5px;top:9.0px;font:21px 'Liberation Serif', serif;color:#333">简体</div>
</div>
<div class="lb" style="left:164.9px;top:367.4px"><span style="font-size:6.4px;letter-spacing:0.4px">新宋体</span> <span style="font-size:6.4px;letter-spacing:0.4px">常规</span></div>
<div class="tile" style="left:224.8px;top:319.0px"><svg class="pg" width="52" height="43" viewBox="0 0 52 43"><path d="M0.5 0.5H39.8L48.8 9.3V40.5H0.5Z" fill="url(#g1)" stroke="#d6d6d6"/><path d="M39.8 0.5V9.3H48.8" fill="#ebebeb" stroke="#d2d2d2"/></svg>
<div class="gl" style="left:-15.5px;top:9.0px;font:21px 'Liberation Sans', sans-serif;color:#333">简体</div>
</div>
<div class="lb" style="left:221.5px;top:367.4px"><span style="font-size:6.4px;letter-spacing:0.4px">幼圆</span> <span style="font-size:6.4px;letter-spacing:0.4px">常规</span></div>
<div class="tile" style="left:281.4px;top:319.0px"><svg class="pg" width="52" height="43" viewBox="0 0 52 43"><path d="M0.5 0.5H39.8L48.8 9.3V40.5H0.5Z" fill="url(#g1)" stroke="#d6d6d6"/><path d="M39.8 0.5V9.3H48.8" fill="#ebebeb" stroke="#d2d2d2"/></svg>
<div class="gl" style="left:-15.5px;top:9.2px;font:19px 'Liberation Sans', sans-serif;-webkit-text-stroke:0.4px #111">简体</div>
</div>
<div class="lb" style="left:278.1px;top:367.4px"><span style="font-size:6.4px;letter-spacing:0.4px">站酷小薇</span>LOGO<br><span style="font-size:6.4px;letter-spacing:0.4px">体</span> <span style="font-size:6.4px;letter-spacing:0.4px">常规</span></div>
</div>
<div class="a" style="left:46px;top:64px;width:638px;height:17px;background:linear-gradient(#f9fafb,#f3f5f7)"></div>
<div class="t" style="left:53.5px;top:70.34px;font-size:6.5px;color:#222;"><span style="font-size:6.11px">组织</span></div>
<div class="a" style="left:69.5px;top:72px;width:2px;height:1px;background:#444"></div>
<svg class="a" style="left:639px;top:69px" width="12" height="8"><rect x="0.5" y="0.5" width="9" height="6" fill="#dbe6f0" stroke="#6b8aa8" stroke-width="0.8"/><path d="M1 5L4 3L6 4.5L9 2.5V6.5H1Z" fill="#3d6a94"/></svg>
<div class="a" style="left:655px;top:72px;width:2px;height:1px;background:#444"></div>
<div class="a" style="left:667.5px;top:68px;width:9.5px;height:9.5px;border-radius:50%;background:radial-gradient(circle at 40% 35%,#4d8fe0,#1a55b0);color:#fff;font-size:7px;line-height:9.5px;text-align:center;font-weight:bold">?</div>
<div class="a" style="left:676px;top:81px;width:8px;height:385px;background:#f0f0f0"></div>
<svg class="a" style="left:677px;top:82.8px" width="7" height="5"><path d="M1 3.5L3.5 1L6 3.5" fill="none" stroke="#606060" stroke-width="0.9"/></svg>
<div class="a" style="left:676px;top:370px;width:7.5px;height:86.7px;background:#cdcdcd"></div>
<svg class="a" style="left:677px;top:460px" width="7" height="5"><path d="M1 1.2L3.5 3.7L6 1.2" fill="none" stroke="#606060" stroke-width="0.9"/></svg>
<div class="a" style="left:46px;top:466.3px;width:638px;height:32px;background:#eef5fc;border-top:1px solid #dde6ee"></div>
<svg class="a" style="left:59px;top:470.5px" width="24" height="24"><path d="M1 1H13.5L14.5 2.5V21H6L1 18.5Z" fill="#f8d878"/><path d="M1 1L6 3.5V21L1 18.5Z" fill="#f0c454"/></svg>
<div class="t" style="left:66.3px;top:478.98px;font-size:16px;color:#1d5a9e;font-family:'Liberation Serif',serif">A</div>
<div class="t" style="left:89.8px;top:471.33px;font-size:7.6px;color:#333;">324 <span style="font-size:6.99px">个项目</span></div>
</div>
<div class="a" style="left:548px;top:130px;width:381px;height:341.5px;box-shadow:-1px 1px 5px 1px rgba(0,0,0,0.16)"></div>
<div class="a" id="w2" style="left:548px;top:130px;width:381px;height:341.5px;background:#fff;overflow:hidden">
<div class="a" style="left:5px;top:5px;width:5px;height:7px;background:#f5cf5a"></div>
<div class="a" style="left:14px;top:4px;width:1px;height:9px;background:#ddd"></div>
<svg class="a" style="left:19px;top:3.5px" width="10" height="11"><rect x="1" y="1.5" width="7" height="8" fill="#fff" stroke="#777" stroke-width="0.8"/><path d="M2.5 5.5L4 7L7 3" fill="none" stroke="#555" stroke-width="0.8"/></svg>
<div class="a" style="left:32px;top:5px;width:5px;height:7px;background:#f5cf5a"></div>
<svg class="a" style="left:42.5px;top:7px" width="5" height="4"><path d="M0.5 0.5H4.5L2.5 3Z" fill="#444"/></svg>
<div class="a" style="left:51px;top:4px;width:1px;height:9px;background:#ddd"></div>
<div class="t" style="left:55.0px;top:6.30px;font-size:6.8px;color:#1a1a1a;">18<span style="font-size:6.39px">个思源黑体</span></div>
<div class="a" style="left:0;top:16.3px;width:29.5px;height:11.7px;background:#1a6fc9"></div>
<div class="t" style="left:8.0px;top:20.10px;font-size:6.6px;color:#fff;"><span style="font-size:6.20px">文件</span></div>
<div class="t" style="left:36.3px;top:20.60px;font-size:6.6px;color:#333;"><span style="font-size:6.20px">主页</span></div>
<div class="t" style="left:62.8px;top:20.60px;font-size:6.6px;color:#333;"><span style="font-size:6.20px">共享</span></div>
<div class="t" style="left:89.9px;top:20.60px;font-size:6.6px;color:#333;"><span style="font-size:6.20px">查看</span></div>
<div class="a" style="left:0;top:29.3px;width:400px;height:1px;background:#e6e6e6"></div>
<svg class="a" style="left:4px;top:34.6px" width="60" height="10"><path d="M2 5H11M2 5L5.5 1.5M2 5L5.5 8.5" fill="none" stroke="#555" stroke-width="0.9"/><path d="M17 5H26M26 5L22.5 1.5M26 5L22.5 8.5" fill="none" stroke="#c4c4c4" stroke-width="0.9"/><path d="M32 5H35" fill="none" stroke="#555" stroke-width="0.9"/><path d="M44.7 9V1.5M44.7 1.5L41.5 4.7M44.7 1.5L48 4.7" fill="none" stroke="#555" stroke-width="0.9"/></svg>
<div class="a" style="left:55px;top:31.4px;width:281.5px;height:16px;border:1px solid #e2e2e2"></div>
<div class="a" style="left:336px;top:31.4px;width:17px;height:16px;border:1px solid #e2e2e2;border-left:0"></div>
<div class="a" style="left:358px;top:31.4px;width:40px;height:16px;border:1px solid #e2e2e2"></div>
<div class="a" style="left:58.5px;top:36px;width:5px;height:6px;background:#f5cf5a"></div>
<div class="a" style="left:68px;top:39.5px;width:3px;height:0.8px;background:#777"></div>
<div class="t" style="left:74.5px;top:37.54px;font-size:6.3px;color:#1a1a1a;"><span style="font-size:5.92px">字体包</span></div>
<svg class="a" style="left:97.5px;top:36.4px" width="4.5" height="6.5"><path d="M1 1L3.5 3.25L1 5.5" fill="none" stroke="#555" stroke-width="0.8"/></svg>
<div class="t" style="left:105.0px;top:37.54px;font-size:6.3px;color:#1a1a1a;"><span style="font-size:5.92px">百个字体，免费可商用</span></div>
<svg class="a" style="left:170.5px;top:36.4px" width="4.5" height="6.5"><path d="M1 1L3.5 3.25L1 5.5" fill="none" stroke="#555" stroke-width="0.8"/></svg>
<div class="t" style="left:179.0px;top:37.54px;font-size:6.3px;color:#1a1a1a;"><span style="font-size:5.92px">百个字体，免费可商用</span></div>
<svg class="a" style="left:245.5px;top:36.4px" width="4.5" height="6.5"><path d="M1 1L3.5 3.25L1 5.5" fill="none" stroke="#555" stroke-width="0.8"/></svg>
<div class="t" style="left:252.0px;top:37.54px;font-size:6.3px;color:#1a1a1a;">18<span style="font-size:5.92px">个思源黑体</span></div>
<svg class="a" style="left:325.5px;top:37.4px" width="7" height="4.5"><path d="M1 1L3.5 3.5L6 1" fill="none" stroke="#444" stroke-width="0.9"/></svg>
<svg class="a" style="left:340px;top:34.6px" width="10" height="10"><path d="M7.5 3.2A3.3 3.3 0 1 0 8.3 5.5" fill="none" stroke="#555" stroke-width="0.9"/><path d="M5.8 1.5L8 3.4L5.6 4.6" fill="none" stroke="#555" stroke-width="0.8"/></svg>
<svg class="a" style="left:363px;top:34.6px" width="10" height="10"><circle cx="6" cy="4" r="2.4" fill="none" stroke="#777" stroke-width="0.8"/><path d="M4.3 5.7L1.5 8.5" stroke="#777" stroke-width="0.9"/></svg>
<div class="a" style="left:0;top:58.3px;width:88px;height:12.1px;background:#d9d9d9"></div>
<div class="t" style="left:13px;top:60.599999999999994px;font-size:9px;color:#3b86d8">★</div>
<div class="t" style="left:23.0px;top:62.90px;font-size:6.6px;color:#1a1a1a;"><span style="font-size:6.20px">快速访问</span></div>
<div class="a" style="left:13.5px;top:78.1px;width:7px;height:5px;background:#4aa8e0"></div><div class="a" style="left:15px;top:83.6px;width:6px;height:1.5px;background:#8aa"></div>
<div class="t" style="left:23.0px;top:79.40px;font-size:6.6px;color:#1a1a1a;"><span style="font-size:6.20px">此电脑</span></div>
<div class="a" style="left:18px;top:90.9px;width:6.5px;height:6.5px;background:#2aa6e6;border-radius:1px"></div>
<div class="t" style="left:27.0px;top:92.20px;font-size:6.6px;color:#1a1a1a;">3D <span style="font-size:6.20px">对象</span></div>
<div class="a" style="left:18px;top:103.3px;width:6.5px;height:6.5px;background:#4a5d7a;border-radius:1px"></div>
<div class="t" style="left:27.0px;top:104.60px;font-size:6.6px;color:#1a1a1a;"><span style="font-size:6.20px">视频</span></div>
<div class="a" style="left:18px;top:115.8px;width:6.5px;height:6.5px;background:#7890a8;border-radius:1px"></div>
<div class="t" style="left:27.0px;top:117.10px;font-size:6.6px;color:#1a1a1a;"><span style="font-size:6.20px">图片</span></div>
<div class="a" style="left:18px;top:128.5px;width:6.5px;height:6.5px;background:#c0ccd8;border-radius:1px"></div>
<div class="t" style="left:27.0px;top:129.80px;font-size:6.6px;color:#1a1a1a;"><span style="font-size:6.20px">文档</span></div>
<svg class="a" style="left:17px;top:139.6px" width="8" height="9"><path d="M2.5 0.5H5.5V4H7.5L4 8L0.5 4H2.5Z" fill="#2f7fd6"/></svg>
<div class="t" style="left:27.0px;top:141.90px;font-size:6.6px;color:#1a1a1a;"><span style="font-size:6.20px">下载</span></div>
<div class="t" style="left:18px;top:150.6px;font-size:11px;color:#3a8ad8">♪</div>
<div class="t" style="left:27.0px;top:154.40px;font-size:6.6px;color:#1a1a1a;"><span style="font-size:6.20px">音乐</span></div>
<div class="a" style="left:16.8px;top:167.1px;width:8px;height:5.2px;background:#1f80d8"></div>
<div class="t" style="left:27.0px;top:167.50px;font-size:6.6px;color:#1a1a1a;"><span style="font-size:6.20px">桌面</span></div>
<svg class="a" style="left:16.5px;top:179.5px" width="9" height="7"><path d="M0.5 4L3 2.5H8.5V5H0.5Z" fill="#e8e8e8" stroke="#666" stroke-width="0.6"/><rect x="1.5" y="0" width="2" height="3" fill="#4aa0e0"/></svg>
<div class="t" style="left:27.0px;top:180.30px;font-size:6.6px;color:#1a1a1a;"><span style="font-size:6.20px">本地磁盘</span> (C:)</div>
<svg class="a" style="left:16.5px;top:192px" width="9" height="7"><path d="M0.5 4L3 2.5H8.5V5H0.5Z" fill="#e8e8e8" stroke="#666" stroke-width="0.6"/></svg>
<div class="t" style="left:27.0px;top:192.80px;font-size:6.6px;color:#1a1a1a;"><span style="font-size:6.20px">新加卷</span> (D:)</div>
<svg class="a" style="left:16.5px;top:204.4px" width="9" height="7"><path d="M0.5 4L3 2.5H8.5V5H0.5Z" fill="#e8e8e8" stroke="#666" stroke-width="0.6"/></svg>
<div class="t" style="left:27.0px;top:205.20px;font-size:6.6px;color:#1a1a1a;"><span style="font-size:6.20px">软件</span> (E:)</div>
<svg class="a" style="left:12.5px;top:220px" width="9" height="8"><rect x="0.5" y="0.5" width="4" height="3" fill="#3a8ed8"/><rect x="4.5" y="3.5" width="4" height="3" fill="#2f7fc8"/><rect x="1" y="4.5" width="3" height="3" fill="#5aa8e8"/></svg>
<div class="t" style="left:23.0px;top:221.80px;font-size:6.6px;color:#1a1a1a;"><span style="font-size:6.20px">网络</span></div>
<div class="a" style="left:89.5px;top:50px;width:1px;height:290px;background:#f8f8f8"></div>
<div class="t" style="left:99.5px;top:54.40px;font-size:6.6px;color:#4c607a;"><span style="font-size:6.20px">名称</span></div>
<svg class="a" style="left:170px;top:47px" width="7" height="5"><path d="M1 3.5L3.5 1L6 3.5" fill="none" stroke="#999" stroke-width="0.8"/></svg>
<div class="t" style="left:254.0px;top:54.40px;font-size:6.6px;color:#4c607a;"><span style="font-size:6.20px">修改日期</span></div>
<div class="t" style="left:339.0px;top:54.40px;font-size:6.6px;color:#4c607a;"><span style="font-size:6.20px">类型</span></div>
<div class="a" style="left:250px;top:50px;width:1px;height:14px;background:#ececec"></div>
<div class="a" style="left:335.6px;top:50px;width:1px;height:14px;background:#ececec"></div>
<div class="a" style="left:97.4px;top:67.00px;width:300px;height:11.22px;background:#cce8ff;border-top:1px solid #b3d9f7"></div>
<svg class="a" style="left:100px;top:69.00px" width="8" height="9"><path d="M0.5 0.5H5L7.5 3V8.5H0.5Z" fill="#fff" stroke="#c2ccd6" stroke-width="0.7"/><path d="M2 5L3 7L4 6" fill="none" stroke="#667" stroke-width="0.6"/></svg>
<div class="t" style="left:109.8px;top:69.75px;font-size:6.5px;color:#111;">SourceHanSansHWSC-Bold.otf</div>
<div class="t" style="left:254.0px;top:69.75px;font-size:6.5px;color:#5a6878;">2017/11/6 22:28</div>
<div class="t" style="left:339.0px;top:69.75px;font-size:6.5px;color:#5a6878;">OpenType <span style="font-size:6.11px">字体</span></div>
<div class="a" style="left:97.4px;top:78.22px;width:300px;height:11.22px;background:#cce8ff;border-top:1px solid #b3d9f7"></div>
<svg class="a" style="left:100px;top:80.22px" width="8" height="9"><path d="M0.5 0.5H5L7.5 3V8.5H0.5Z" fill="#fff" stroke="#c2ccd6" stroke-width="0.7"/><path d="M2 5L3 7L4 6" fill="none" stroke="#667" stroke-width="0.6"/></svg>
<div class="t" style="left:109.8px;top:80.97px;font-size:6.5px;color:#111;">SourceHanSansHWSC-Regular.otf</div>
<div class="t" style="left:254.0px;top:80.97px;font-size:6.5px;color:#5a6878;">2017/11/6 22:28</div>
<div class="t" style="left:339.0px;top:80.97px;font-size:6.5px;color:#5a6878;">OpenType <span style="font-size:6.11px">字体</span></div>
<div class="a" style="left:97.4px;top:89.44px;width:300px;height:11.22px;background:#cce8ff;border-top:1px solid #b3d9f7"></div>
<svg class="a" style="left:100px;top:91.44px" width="8" height="9"><path d="M0.5 0.5H5L7.5 3V8.5H0.5Z" fill="#fff" stroke="#c2ccd6" stroke-width="0.7"/><path d="M2 5L3 7L4 6" fill="none" stroke="#667" stroke-width="0.6"/></svg>
<div class="t" style="left:109.8px;top:92.19px;font-size:6.5px;color:#111;">SourceHanSansHWTC-Bold.otf</div>
<div class="t" style="left:254.0px;top:92.19px;font-size:6.5px;color:#5a6878;">2017/11/6 22:28</div>
<div class="t" style="left:339.0px;top:92.19px;font-size:6.5px;color:#5a6878;">OpenType <span style="font-size:6.11px">字体</span></div>
<div class="a" style="left:97.4px;top:100.66px;width:300px;height:11.22px;background:#cce8ff;border-top:1px solid #b3d9f7"></div>
<svg class="a" style="left:100px;top:102.66px" width="8" height="9"><path d="M0.5 0.5H5L7.5 3V8.5H0.5Z" fill="#fff" stroke="#c2ccd6" stroke-width="0.7"/><path d="M2 5L3 7L4 6" fill="none" stroke="#667" stroke-width="0.6"/></svg>
<div class="t" style="left:109.8px;top:103.41px;font-size:6.5px;color:#111;">SourceHanSansHWTC-Regular.otf</div>
<div class="t" style="left:254.0px;top:103.41px;font-size:6.5px;color:#5a6878;">2017/11/6 22:28</div>
<div class="t" style="left:339.0px;top:103.41px;font-size:6.5px;color:#5a6878;">OpenType <span style="font-size:6.11px">字体</span></div>
<div class="a" style="left:97.4px;top:111.88px;width:300px;height:11.22px;background:#cce8ff;border-top:1px solid #b3d9f7"></div>
<svg class="a" style="left:100px;top:113.88px" width="8" height="9"><path d="M0.5 0.5H5L7.5 3V8.5H0.5Z" fill="#fff" stroke="#c2ccd6" stroke-width="0.7"/><path d="M2 5L3 7L4 6" fill="none" stroke="#667" stroke-width="0.6"/></svg>
<div class="t" style="left:109.8px;top:114.62px;font-size:6.5px;color:#111;">SourceHanSansSC-Bold.otf</div>
<div class="t" style="left:254.0px;top:114.62px;font-size:6.5px;color:#5a6878;">2017/11/6 22:28</div>
<div class="t" style="left:339.0px;top:114.62px;font-size:6.5px;color:#5a6878;">OpenType <span style="font-size:6.11px">字体</span></div>
<div class="a" style="left:97.4px;top:123.10px;width:300px;height:11.22px;background:#cce8ff;border-top:1px solid #b3d9f7"></div>
<svg class="a" style="left:100px;top:125.10px" width="8" height="9"><path d="M0.5 0.5H5L7.5 3V8.5H0.5Z" fill="#fff" stroke="#c2ccd6" stroke-width="0.7"/><path d="M2 5L3 7L4 6" fill="none" stroke="#667" stroke-width="0.6"/></svg>
<div class="t" style="left:109.8px;top:125.84px;font-size:6.5px;color:#111;">SourceHanSansSC-ExtraLight.otf</div>
<div class="t" style="left:254.0px;top:125.84px;font-size:6.5px;color:#5a6878;">2017/11/6 22:28</div>
<div class="t" style="left:339.0px;top:125.84px;font-size:6.5px;color:#5a6878;">OpenType <span style="font-size:6.11px">字体</span></div>
<div class="a" style="left:97.4px;top:134.32px;width:300px;height:11.22px;background:#cce8ff;border-top:1px solid #b3d9f7"></div>
<svg class="a" style="left:100px;top:136.32px" width="8" height="9"><path d="M0.5 0.5H5L7.5 3V8.5H0.5Z" fill="#fff" stroke="#c2ccd6" stroke-width="0.7"/><path d="M2 5L3 7L4 6" fill="none" stroke="#667" stroke-width="0.6"/></svg>
<div class="t" style="left:109.8px;top:137.06px;font-size:6.5px;color:#111;">SourceHanSansSC-Heavy.otf</div>
<div class="t" style="left:254.0px;top:137.06px;font-size:6.5px;color:#5a6878;">2017/11/6 22:28</div>
<div class="t" style="left:339.0px;top:137.06px;font-size:6.5px;color:#5a6878;">OpenType <span style="font-size:6.11px">字体</span></div>
<div class="a" style="left:97.4px;top:145.54px;width:300px;height:11.22px;background:#cce8ff;border-top:1px solid #b3d9f7"></div>
<svg class="a" style="left:100px;top:147.54px" width="8" height="9"><path d="M0.5 0.5H5L7.5 3V8.5H0.5Z" fill="#fff" stroke="#c2ccd6" stroke-width="0.7"/><path d="M2 5L3 7L4 6" fill="none" stroke="#667" stroke-width="0.6"/></svg>
<div class="t" style="left:109.8px;top:148.29px;font-size:6.5px;color:#111;">SourceHanSansSC-Light.otf</div>
<div class="t" style="left:254.0px;top:148.29px;font-size:6.5px;color:#5a6878;">2017/11/6 22:28</div>
<div class="t" style="left:339.0px;top:148.29px;font-size:6.5px;color:#5a6878;">OpenType <span style="font-size:6.11px">字体</span></div>
<div class="a" style="left:97.4px;top:156.76px;width:300px;height:11.22px;background:#cce8ff;border-top:1px solid #b3d9f7"></div>
<svg class="a" style="left:100px;top:158.76px" width="8" height="9"><path d="M0.5 0.5H5L7.5 3V8.5H0.5Z" fill="#fff" stroke="#c2ccd6" stroke-width="0.7"/><path d="M2 5L3 7L4 6" fill="none" stroke="#667" stroke-width="0.6"/></svg>
<div class="t" style="left:109.8px;top:159.50px;font-size:6.5px;color:#111;">SourceHanSansSC-Medium.otf</div>
<div class="t" style="left:254.0px;top:159.50px;font-size:6.5px;color:#5a6878;">2017/11/6 22:28</div>
<div class="t" style="left:339.0px;top:159.50px;font-size:6.5px;color:#5a6878;">OpenType <span style="font-size:6.11px">字体</span></div>
<div class="a" style="left:97.4px;top:167.98px;width:300px;height:11.22px;background:#cce8ff;border-top:1px solid #b3d9f7"></div>
<svg class="a" style="left:100px;top:169.98px" width="8" height="9"><path d="M0.5 0.5H5L7.5 3V8.5H0.5Z" fill="#fff" stroke="#c2ccd6" stroke-width="0.7"/><path d="M2 5L3 7L4 6" fill="none" stroke="#667" stroke-width="0.6"/></svg>
<div class="t" style="left:109.8px;top:170.73px;font-size:6.5px;color:#111;">SourceHanSansSC-Normal.otf</div>
<div class="t" style="left:254.0px;top:170.73px;font-size:6.5px;color:#5a6878;">2017/11/6 22:28</div>
<div class="t" style="left:339.0px;top:170.73px;font-size:6.5px;color:#5a6878;">OpenType <span style="font-size:6.11px">字体</span></div>
<div class="a" style="left:97.4px;top:179.20px;width:300px;height:11.22px;background:#cce8ff;border-top:1px solid #b3d9f7"></div>
<svg class="a" style="left:100px;top:181.20px" width="8" height="9"><path d="M0.5 0.5H5L7.5 3V8.5H0.5Z" fill="#fff" stroke="#c2ccd6" stroke-width="0.7"/><path d="M2 5L3 7L4 6" fill="none" stroke="#667" stroke-width="0.6"/></svg>
<div class="t" style="left:109.8px;top:181.94px;font-size:6.5px;color:#111;">SourceHanSansSC-Regular.otf</div>
<div class="t" style="left:254.0px;top:181.94px;font-size:6.5px;color:#5a6878;">2017/11/6 22:28</div>
<div class="t" style="left:339.0px;top:181.94px;font-size:6.5px;color:#5a6878;">OpenType <span style="font-size:6.11px">字体</span></div>
<div class="a" style="left:97.4px;top:190.42px;width:300px;height:11.22px;background:#cce8ff;border-top:1px solid #b3d9f7"></div>
<svg class="a" style="left:100px;top:192.42px" width="8" height="9"><path d="M0.5 0.5H5L7.5 3V8.5H0.5Z" fill="#fff" stroke="#c2ccd6" stroke-width="0.7"/><path d="M2 5L3 7L4 6" fill="none" stroke="#667" stroke-width="0.6"/></svg>
<div class="t" style="left:109.8px;top:193.17px;font-size:6.5px;color:#111;">SourceHanSansTC-Bold.otf</div>
<div class="t" style="left:254.0px;top:193.17px;font-size:6.5px;color:#5a6878;">2017/11/6 22:28</div>
<div class="t" style="left:339.0px;top:193.17px;font-size:6.5px;color:#5a6878;">OpenType <span style="font-size:6.11px">字体</span></div>
<div class="a" style="left:97.4px;top:201.64px;width:300px;height:11.22px;background:#cce8ff;border-top:1px solid #b3d9f7"></div>
<svg class="a" style="left:100px;top:203.64px" width="8" height="9"><path d="M0.5 0.5H5L7.5 3V8.5H0.5Z" fill="#fff" stroke="#c2ccd6" stroke-width="0.7"/><path d="M2 5L3 7L4 6" fill="none" stroke="#667" stroke-width="0.6"/></svg>
<div class="t" style="left:109.8px;top:204.39px;font-size:6.5px;color:#111;">SourceHanSansTC-ExtraLight.otf</div>
<div class="t" style="left:254.0px;top:204.39px;font-size:6.5px;color:#5a6878;">2017/11/6 22:28</div>
<div class="t" style="left:339.0px;top:204.39px;font-size:6.5px;color:#5a6878;">OpenType <span style="font-size:6.11px">字体</span></div>
<div class="a" style="left:97.4px;top:212.86px;width:300px;height:11.22px;background:#cce8ff;border-top:1px solid #b3d9f7"></div>
<svg class="a" style="left:100px;top:214.86px" width="8" height="9"><path d="M0.5 0.5H5L7.5 3V8.5H0.5Z" fill="#fff" stroke="#c2ccd6" stroke-width="0.7"/><path d="M2 5L3 7L4 6" fill="none" stroke="#667" stroke-width="0.6"/></svg>
<div class="t" style="left:109.8px;top:215.61px;font-size:6.5px;color:#111;">SourceHanSansTC-Heavy.otf</div>
<div class="t" style="left:254.0px;top:215.61px;font-size:6.5px;color:#5a6878;">2017/11/6 22:28</div>
<div class="t" style="left:339.0px;top:215.61px;font-size:6.5px;color:#5a6878;">OpenType <span style="font-size:6.11px">字体</span></div>
<div class="a" style="left:97.4px;top:224.08px;width:300px;height:11.22px;background:#cce8ff;border-top:1px solid #b3d9f7"></div>
<svg class="a" style="left:100px;top:226.08px" width="8" height="9"><path d="M0.5 0.5H5L7.5 3V8.5H0.5Z" fill="#fff" stroke="#c2ccd6" stroke-width="0.7"/><path d="M2 5L3 7L4 6" fill="none" stroke="#667" stroke-width="0.6"/></svg>
<div class="t" style="left:109.8px;top:226.83px;font-size:6.5px;color:#111;">SourceHanSansTC-Light.otf</div>
<div class="t" style="left:254.0px;top:226.83px;font-size:6.5px;color:#5a6878;">2017/11/6 22:28</div>
<div class="t" style="left:339.0px;top:226.83px;font-size:6.5px;color:#5a6878;">OpenType <span style="font-size:6.11px">字体</span></div>
<div class="a" style="left:97.4px;top:235.30px;width:300px;height:11.22px;background:#cce8ff;border-top:1px solid #b3d9f7"></div>
<svg class="a" style="left:100px;top:237.30px" width="8" height="9"><path d="M0.5 0.5H5L7.5 3V8.5H0.5Z" fill="#fff" stroke="#c2ccd6" stroke-width="0.7"/><path d="M2 5L3 7L4 6" fill="none" stroke="#667" stroke-width="0.6"/></svg>
<div class="t" style="left:109.8px;top:238.05px;font-size:6.5px;color:#111;">SourceHanSansTC-Medium.otf</div>
<div class="t" style="left:254.0px;top:238.05px;font-size:6.5px;color:#5a6878;">2017/11/6 22:28</div>
<div class="t" style="left:339.0px;top:238.05px;font-size:6.5px;color:#5a6878;">OpenType <span style="font-size:6.11px">字体</span></div>
<div class="t" style="left:8.0px;top:332.70px;font-size:6.6px;color:#333;">16 <span style="font-size:6.20px">个项目</span></div>
<div class="t" style="left:48.2px;top:332.70px;font-size:6.6px;color:#333;"><span style="font-size:6.20px">已选择</span> 16 <span style="font-size:6.20px">个项目</span>&nbsp; 251 MB</div>
</div>
<div class="a" style="left:722.0px;top:209.0px;width:145px;height:216px;background:rgba(0,0,0,0.12);filter:blur(1px)"></div>
<div class="a" id="cm" style="left:720.5px;top:207.5px;width:144px;height:215px;background:#eeeeee;border:1px solid #a0a0a0;overflow:hidden">
<div class="a" style="left:0;top:147.4px;width:142px;height:12px;background:#ffffff"></div>
<div class="t" style="left:16.5px;top:3.50px;font-size:6.8px;color:#111;font-weight:bold;"><span style="font-size:6.19px">安装</span>(I)</div>
<div class="t" style="left:16.5px;top:15.20px;font-size:6.8px;color:#111;"><span style="font-size:6.19px">为所有用户安装</span>(A)</div>
<svg class="a" style="left:4.5px;top:13.0px" width="9" height="10"><path d="M4.5 0.5L8.5 2V5.5Q8.5 8 4.5 9.5Q0.5 8 0.5 5.5V2Z" fill="#2a6fc9"/><path d="M4.5 0.5L8.5 2V5H4.5ZM0.5 5H4.5V9.5Q0.5 8 0.5 5.5Z" fill="#f0c020"/></svg>
<div class="a" style="left:5px;top:25.0px;width:133px;height:1px;background:#d0d0d0"></div>
<div class="t" style="left:16.5px;top:30.70px;font-size:6.8px;color:#111;"><span style="font-size:6.19px">添加到压缩文件</span>(A)...</div>
<svg class="a" style="left:4.5px;top:28.5px" width="9" height="10"><rect x="0.5" y="0.5" width="8" height="9" fill="#3aa0e8"/><rect x="3" y="2" width="5.5" height="7.5" fill="#b86c2a"/><rect x="3.5" y="4" width="4" height="2" fill="#e8c040"/></svg>
<div class="t" style="left:16.5px;top:42.00px;font-size:6.8px;color:#111;"><span style="font-size:6.19px">添加到</span> &quot;18<span style="font-size:6.19px">个思源黑体</span>.zip&quot; (T)</div>
<svg class="a" style="left:4.5px;top:39.8px" width="9" height="10"><rect x="0.5" y="0.5" width="8" height="9" fill="#3aa0e8"/><rect x="3" y="2" width="5.5" height="7.5" fill="#b86c2a"/><rect x="3.5" y="4" width="4" height="2" fill="#e8c040"/></svg>
<div class="t" style="left:16.5px;top:53.10px;font-size:6.8px;color:#111;"><span style="font-size:6.19px">其他压缩命令</span></div>
<svg class="a" style="left:133.5px;top:50.9px" width="5.5" height="9"><path d="M1 1L4.5 4.5L1 8" fill="none" stroke="#444" stroke-width="0.9"/></svg>
<svg class="a" style="left:4.5px;top:50.9px" width="9" height="10"><rect x="0.5" y="0.5" width="8" height="9" fill="#3aa0e8"/><rect x="3" y="2" width="5.5" height="7.5" fill="#b86c2a"/><rect x="3.5" y="4" width="4" height="2" fill="#e8c040"/></svg>
<div class="a" style="left:5px;top:62.7px;width:133px;height:1px;background:#d0d0d0"></div>
<div class="t" style="left:16.5px;top:68.60px;font-size:6.8px;color:#111;">7-Zip</div>
<svg class="a" style="left:133.5px;top:66.4px" width="5.5" height="9"><path d="M1 1L4.5 4.5L1 8" fill="none" stroke="#444" stroke-width="0.9"/></svg>
<div class="t" style="left:16.5px;top:80.80px;font-size:6.8px;color:#111;">Edit with Notepad++</div>
<svg class="a" style="left:4.5px;top:78.6px" width="9" height="10"><rect x="0.5" y="1" width="7" height="8.5" fill="#a8d870"/><path d="M2 7L7 2" stroke="#5a8a30" stroke-width="1.2"/></svg>
<div class="t" style="left:16.5px;top:91.90px;font-size:6.8px;color:#111;"><span style="font-size:6.19px">共享</span></div>
<svg class="a" style="left:4.5px;top:89.7px" width="9" height="10"><path d="M1 4V9H7" fill="none" stroke="#555" stroke-width="0.8"/><path d="M3 6Q4 3 7.5 3M6 1.5L7.8 3L6 4.5" fill="none" stroke="#555" stroke-width="0.8"/></svg>
<div class="a" style="left:5px;top:102.2px;width:133px;height:1px;background:#d0d0d0"></div>
<div class="t" style="left:16.5px;top:107.60px;font-size:6.8px;color:#111;"><span style="font-size:6.19px">授予访问权限</span>(G)</div>
<svg class="a" style="left:133.5px;top:105.4px" width="5.5" height="9"><path d="M1 1L4.5 4.5L1 8" fill="none" stroke="#444" stroke-width="0.9"/></svg>
<div class="a" style="left:5px;top:117.7px;width:133px;height:1px;background:#d0d0d0"></div>
<div class="t" style="left:16.5px;top:123.10px;font-size:6.8px;color:#111;"><span style="font-size:6.19px">发送到</span>(N)</div>
<svg class="a" style="left:133.5px;top:120.9px" width="5.5" height="9"><path d="M1 1L4.5 4.5L1 8" fill="none" stroke="#444" stroke-width="0.9"/></svg>
<div class="a" style="left:5px;top:133.2px;width:133px;height:1px;background:#d0d0d0"></div>
<div class="t" style="left:16.5px;top:138.10px;font-size:6.8px;color:#111;"><span style="font-size:6.19px">剪切</span>(T)</div>
<div class="t" style="left:16.5px;top:149.70px;font-size:6.8px;color:#111;"><span style="font-size:6.19px">复制</span>(C)</div>
<div class="a" style="left:5px;top:160.3px;width:133px;height:1px;background:#d0d0d0"></div>
<div class="t" style="left:16.5px;top:165.20px;font-size:6.8px;color:#111;"><span style="font-size:6.19px">创建快捷方式</span>(S)</div>
<div class="t" style="left:16.5px;top:176.60px;font-size:6.8px;color:#111;"><span style="font-size:6.19px">删除</span>(D)</div>
<div class="t" style="left:16.5px;top:188.40px;font-size:6.8px;color:#111;"><span style="font-size:6.19px">重命名</span>(M)</div>
<div class="a" style="left:5px;top:198.5px;width:133px;height:1px;background:#d0d0d0"></div>
<div class="t" style="left:16.5px;top:204.00px;font-size:6.8px;color:#111;"><span style="font-size:6.19px">属性</span>(R)</div>
</div>
<div class="t" style="left:407px;top:262px;font-size:20px;color:rgba(245,150,100,0.26);letter-spacing:5.5px">丁同学日记本</div>
<svg class="a" style="left:360px;top:252px" width="50" height="46"><path d="M8 24L11 6L21 17H29L38 5L42 24Q45 36 36 40H14Q5 36 8 24Z" fill="rgba(245,185,140,0.26)" stroke="rgba(240,160,110,0.22)" stroke-width="1"/><ellipse cx="25" cy="31" rx="9" ry="6" fill="rgba(255,255,255,0.45)"/><circle cx="25" cy="29" r="1.5" fill="rgba(120,90,80,0.25)"/><ellipse cx="14" cy="39" rx="6" ry="4.5" fill="rgba(255,255,255,0.6)" stroke="rgba(240,160,120,0.3)" stroke-width="0.8"/><ellipse cx="36" cy="39" rx="6" ry="4.5" fill="rgba(255,255,255,0.6)" stroke="rgba(240,160,120,0.3)" stroke-width="0.8"/></svg>
<svg class="a" style="left:0;top:0" width="929" height="563" viewBox="0 0 929 563"><path d="M464.73 541.53 L717.83 364.74 L715.05 360.82 L464.27 540.87 Z" fill="#ea2e25"/><path d="M724.6 357.0 L717.10 370.64 L709.24 359.54 Z" fill="#ea2e25"/><circle cx="746.5" cy="356.3" r="8.8" fill="#f4e41e"/><path d="M747.5 352 L747.5 362 L749.8 359.8 L751.6 363.6 L753 363 L751.3 359.2 L754.6 359.2 Z" fill="rgba(255,255,255,0.75)" stroke="rgba(60,60,60,0.6)" stroke-width="0.5"/></svg></body></html>
